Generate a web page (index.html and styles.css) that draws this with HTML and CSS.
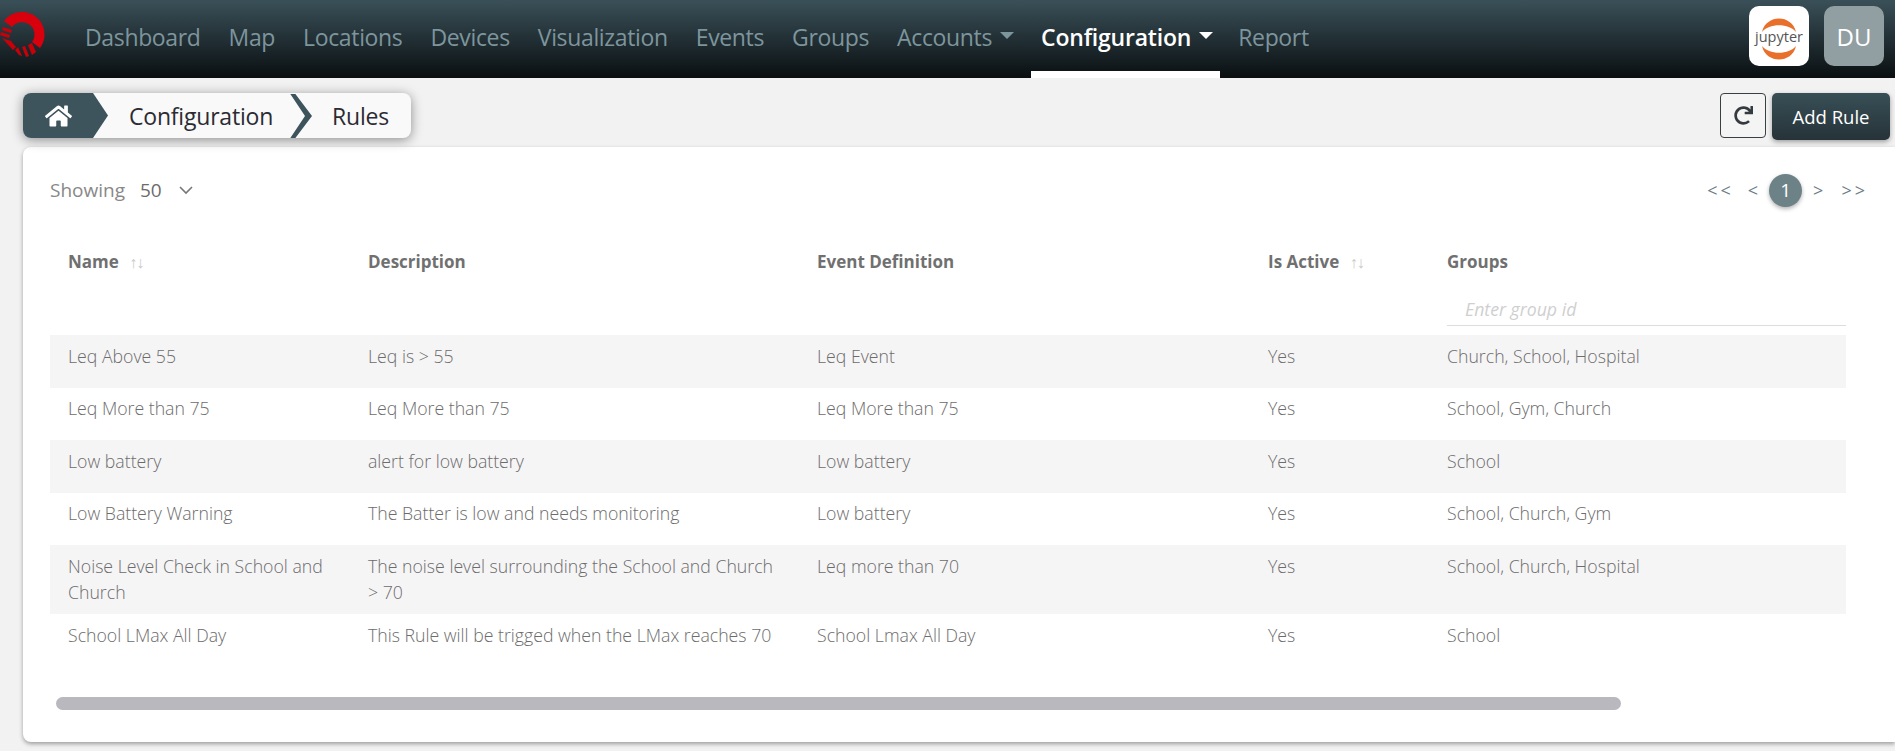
FILE: index.html
```html
<!DOCTYPE html>
<html lang="en">
<head>
    <meta charset="UTF-8">
    <meta name="viewport" content="width=device-width, initial-scale=1.0">
    <title>Rules</title>
    <link rel="stylesheet" href="styles.css">
</head>
<body>
    <header class="topbar">
        <svg class="logo" viewBox="0 0 48 60" aria-hidden="true">
            <path d="M8 24A15.5 15.5 0 1 1 36 45" fill="none" stroke="#d8000c" stroke-width="10"/>
            <path d="M3 27l9 3-1 3-9-3zM1 32l9 3-1 3-9-3zM2 38l9 3 5 6-3 3z" fill="#c8000a"/>
            <path d="M15 50l3-3 4 9-3-1zM22 47l3-1 4 10-3 1zM28 45l4-2 4 9-4 3z" fill="#c8000a"/>
        </svg>
        <nav class="nav">
            <a class="nav-link">Dashboard</a>
            <a class="nav-link">Map</a>
            <a class="nav-link">Locations</a>
            <a class="nav-link">Devices</a>
            <a class="nav-link">Visualization</a>
            <a class="nav-link">Events</a>
            <a class="nav-link">Groups</a>
            <a class="nav-link caret">Accounts</a>
            <a class="nav-link caret active">Configuration</a>
            <a class="nav-link">Report</a>
        </nav>
        <div class="top-actions">
            <div class="tile tile-jupyter">
                <svg viewBox="0 0 60 60" aria-hidden="true">
                    <path d="M13 26C17 8 43 8 47 26C40 17 20 17 13 26Z" fill="#e8702a"/>
                    <path d="M13 40C17 58 43 58 47 40C40 49 20 49 13 40Z" fill="#e8702a"/>
                    <text x="30" y="36" text-anchor="middle" class="jupyter-text">jupyter</text>
                </svg>
            </div>
            <div class="tile tile-user">DU</div>
        </div>
    </header>

    <div class="toolbar">
        <div class="crumbs">
            <div class="crumb-home">
                <svg viewBox="0 0 576 512" aria-hidden="true"><path d="M280.37 148.26L96 300.11V464a16 16 0 0 0 16 16l112.06-.29a16 16 0 0 0 15.92-16V368a16 16 0 0 1 16-16h64a16 16 0 0 1 16 16v95.64a16 16 0 0 0 16 16.05L464 480a16 16 0 0 0 16-16V300L295.67 148.26a12.19 12.19 0 0 0-15.3 0zM571.6 251.47L488 182.56V44.05a12 12 0 0 0-12-12h-56a12 12 0 0 0-12 12v72.61L318.47 43a48 48 0 0 0-61 0L4.34 251.47a12 12 0 0 0-1.6 16.9l25.5 31A12 12 0 0 0 45.15 301l235.22-193.74a12.19 12.19 0 0 1 15.3 0L530.9 301a12 12 0 0 0 16.9-1.6l25.5-31a12 12 0 0 0-1.7-16.93z"/></svg>
            </div>
            <span class="crumb crumb-mid">Configuration</span>
            <span class="crumb crumb-last">Rules</span>
        </div>
        <div class="toolbar-actions">
            <button class="btn-refresh" type="button" aria-label="Refresh">
                <svg viewBox="0 0 512 512" aria-hidden="true"><path d="M500.33 0h-47.41a12 12 0 0 0-12 12.57l4 82.76A247.42 247.42 0 0 0 256 8C119.34 8 7.9 119.53 8 256.19 8.1 393.07 119.1 504 256 504a247.1 247.1 0 0 0 166.18-63.91 12 12 0 0 0 .48-17.43l-34-34a12 12 0 0 0-16.38-.55A176 176 0 1 1 402.1 157.8l-101.53-4.87a12 12 0 0 0-12.57 12v47.41a12 12 0 0 0 12 12h200.33a12 12 0 0 0 12-12V12a12 12 0 0 0-12-12z"/></svg>
            </button>
            <button class="btn-add" type="button">Add Rule</button>
        </div>
    </div>

    <main class="card">
        <div class="card-top">
            <div class="showing">
                <span>Showing</span>
                <span class="showing-num">50</span>
                <svg class="chevron" viewBox="0 0 16 10" aria-hidden="true"><path d="M2 2l6 6 6-6" fill="none" stroke="#777" stroke-width="1.6"/></svg>
            </div>
            <div class="pager">
                <span class="pager-wide pager-first">&lt;&lt;</span>
                <span>&lt;</span>
                <span class="pager-current">1</span>
                <span>&gt;</span>
                <span class="pager-wide">&gt;&gt;</span>
            </div>
        </div>

        <table class="rules">
            <colgroup>
                <col class="col-name"><col class="col-desc"><col class="col-event"><col class="col-active"><col class="col-groups">
            </colgroup>
            <thead>
                <tr>
                    <th>Name <span class="sort">↑↓</span></th>
                    <th>Description</th>
                    <th>Event Definition</th>
                    <th>Is Active <span class="sort">↑↓</span></th>
                    <th class="th-groups">
                        Groups
                        <input class="group-input" type="text" placeholder="Enter group id">
                    </th>
                </tr>
            </thead>
            <tbody>
                <tr><td>Leq Above 55</td><td>Leq is &gt; 55</td><td>Leq Event</td><td>Yes</td><td>Church, School, Hospital</td></tr>
                <tr><td>Leq More than 75</td><td>Leq More than 75</td><td>Leq More than 75</td><td>Yes</td><td>School, Gym, Church</td></tr>
                <tr><td>Low battery</td><td>alert for low battery</td><td>Low battery</td><td>Yes</td><td>School</td></tr>
                <tr><td>Low Battery Warning</td><td>The Batter is low and needs monitoring</td><td>Low battery</td><td>Yes</td><td>School, Church, Gym</td></tr>
                <tr><td>Noise Level Check in School and Church</td><td>The noise level surrounding the School and Church &gt; 70</td><td>Leq more than 70</td><td>Yes</td><td>School, Church, Hospital</td></tr>
                <tr><td>School LMax All Day</td><td>This Rule will be trigged when the LMax reaches 70</td><td>School Lmax All Day</td><td>Yes</td><td>School</td></tr>
            </tbody>
        </table>

        <div class="scroll-track"><div class="scroll-thumb"></div></div>
    </main>
</body>
</html>
```

FILE: styles.css
```css
/* Page */
body {
    margin: 0;
    height: 751px;
    overflow: hidden;
    background: #f2f2f2;
    font-family: 'Open Sans', 'Noto Sans', sans-serif;
    color: #6c6c6c;
}

/* Top bar */
.topbar {
    height: 78px;
    display: flex;
    align-items: stretch;
    background: linear-gradient(#3a5058, #0a0f11);
}

.logo {
    width: 48px;
    height: 60px;
    flex: none;
}

.nav {
    display: flex;
    margin-left: 23px;
}

.nav-link {
    display: flex;
    align-items: center;
    height: 69px;
    padding: 4px 14px 0;
    font-size: 23px;
    letter-spacing: -0.35px;
    color: #7d959d;
    border-bottom: 7px solid transparent;
    margin-top: -2px;
}

.nav-link.caret::after {
    content: "";
    margin: -2px 0 0 8px;
    border-left: 7px solid transparent;
    border-right: 7px solid transparent;
    border-top: 7px solid currentColor;
}

.nav-link.active {
    color: #fff;
    font-weight: 600;
    letter-spacing: -0.2px;
    margin-left: 3px;
    margin-right: 4px;
    padding: 4px 7px 0 10px;
    border-bottom-color: #fff;
}

.top-actions {
    margin-left: auto;
    display: flex;
    gap: 15px;
    padding: 6px 11px 0 0;
}

.tile {
    width: 60px;
    height: 60px;
    border-radius: 10px;
    display: flex;
    align-items: center;
    justify-content: center;
}

.tile-jupyter {
    background: #fff;
}

.tile-jupyter svg {
    width: 60px;
    height: 60px;
}

.jupyter-text {
    font-size: 14.5px;
    font-family: 'Open Sans', sans-serif;
    fill: #555;
}

.tile-user {
    background: #929fa2;
    color: #fff;
    font-size: 24px;
}

/* Breadcrumb row */
.toolbar {
    display: flex;
    justify-content: space-between;
    align-items: flex-start;
    height: 54px;
    padding: 15px 5px 0 23px;
}

.crumbs {
    display: flex;
    align-items: center;
    width: 388px;
    height: 45px;
    background: #f9f9f9;
    border-radius: 8px;
    box-shadow: 0 2px 12px rgba(0, 0, 0, 0.42);
    position: relative;
    overflow: hidden;
    font-size: 23px;
    letter-spacing: -0.2px;
    color: #2b2b33;
}

.crumb-home {
    width: 85px;
    height: 45px;
    background: #3d545c;
    clip-path: polygon(0 0, 70px 0, 85px 50%, 70px 100%, 0 100%);
    display: flex;
    align-items: center;
    padding-left: 22px;
    box-sizing: border-box;
    flex: none;
}

.crumb-home svg {
    width: 27px;
    height: 24px;
    fill: #fff;
}

.crumb {
    position: relative;
}

.crumb-mid {
    margin-left: 21px;
    width: 203px;
    flex: none;
}

.crumb-mid::after {
    content: "";
    position: absolute;
    left: 161px;
    top: -6px;
    width: 22px;
    height: 45px;
    background: #3d545c;
    clip-path: polygon(0 0, 5px 0, 22px 50%, 5px 100%, 0 100%, 15px 50%);
}

/* Buttons */
.toolbar-actions {
    display: flex;
    gap: 6px;
}

.btn-refresh {
    width: 46px;
    height: 45px;
    padding: 0;
    background: #f4f4f4;
    border: 1px solid #3a3f44;
    border-radius: 4px;
    display: flex;
    align-items: center;
    justify-content: center;
}

.btn-refresh svg {
    width: 19px;
    height: 19px;
    fill: #343a40;
}

.btn-add {
    width: 118px;
    height: 47px;
    border: 0;
    border-radius: 5px;
    background: linear-gradient(#384f56, #263339);
    color: #fff;
    font-family: inherit;
    font-size: 18.5px;
    box-shadow: 0 2px 5px rgba(0, 0, 0, 0.35);
}

/* Card */
.card {
    height: 595px;
    margin-left: 23px;
    padding: 0 49px 0 27px;
    box-sizing: border-box;
    background: #fff;
    border-radius: 8px 0 0 8px;
    box-shadow: 0 2px 4px rgba(0, 0, 0, 0.35);
}

.card-top {
    display: flex;
    justify-content: space-between;
    align-items: center;
    height: 86px;
}

.showing {
    display: flex;
    align-items: center;
    font-size: 19px;
    color: #888;
}

.showing-num {
    margin-left: 15px;
    color: #6c6c6c;
}

.chevron {
    width: 16px;
    height: 10px;
    margin-left: 16px;
}

.pager {
    display: flex;
    align-items: center;
    gap: 11px;
    margin-right: -29px;
    font-size: 18px;
    color: #6b7c85;
}

.pager-wide {
    letter-spacing: 3px;
    margin: 0 7px;
}

.pager-first {
    margin-right: 3px;
}

.pager-current {
    width: 33px;
    height: 33px;
    border-radius: 50%;
    background: #6d8287;
    color: #fff;
    display: flex;
    align-items: center;
    justify-content: center;
    font-size: 19px;
    box-shadow: 0 2px 4px rgba(0, 0, 0, 0.3);
}

/* Rules table */
.rules {
    width: 1796px;
    table-layout: fixed;
    border-collapse: collapse;
    font-size: 17.7px;
}

.col-name { width: 300px; }
.col-desc { width: 449px; }
.col-event { width: 451px; }
.col-active { width: 179px; }
.col-groups { width: 417px; }

.rules th {
    height: 102px;
    padding: 17px 0 0 18px;
    box-sizing: border-box;
    text-align: left;
    vertical-align: top;
    font-size: 17px;
    line-height: 23px;
    font-weight: 700;
    color: #707070;
}

.sort {
    margin-left: 6px;
    font-size: 16px;
    font-weight: 300;
    letter-spacing: -1px;
    color: #c9c9c9;
}

.group-input {
    display: block;
    width: 100%;
    box-sizing: border-box;
    height: 37px;
    margin-top: 16px;
    padding: 4px 18px 0;
    border: 0;
    border-bottom: 1px solid #ddd;
    outline: none;
    font-family: inherit;
    font-size: 17.7px;
    font-style: italic;
}

.group-input::placeholder {
    color: #cfcfcf;
}

.rules td {
    height: 52.5px;
    padding: 7.5px 18px 8.5px;
    box-sizing: border-box;
    vertical-align: top;
    line-height: 26.7px;
    color: #6c6c6c;
    font-weight: 300;
}

.rules tbody tr:nth-child(odd) {
    background: #f6f5f6;
}

/* Fake horizontal scrollbar */
.scroll-track {
    margin: 30px 0 0 6px;
    height: 13px;
}

.scroll-thumb {
    width: 1565px;
    height: 13px;
    border-radius: 7px;
    background: #b8b8be;
}
```
